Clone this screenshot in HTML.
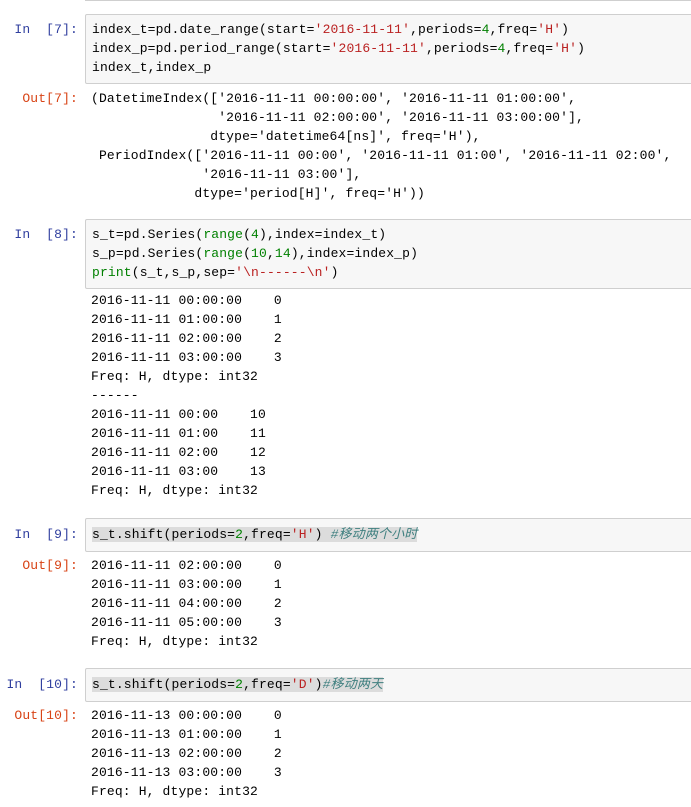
<!DOCTYPE html>
<html><head><meta charset="utf-8"><style>
body{margin:0;width:691px;height:807px;background:#fff;overflow:hidden;position:relative;font-family:"Liberation Mono","Noto Sans CJK SC",monospace;font-size:13px;letter-spacing:0.15px}
.l{position:absolute;white-space:pre;line-height:19px;height:19px}
.box{position:absolute;left:85px;width:620px;background:#f7f7f7;border:1px solid #cfcfcf;border-radius:2px}
.in{color:#303f9f;text-align:right;width:78px;left:0}
.out{color:#d84315;text-align:right;width:78px;left:0}
.s{color:#ba2121}.n{color:#008000}.c{color:#408080;font-style:italic}
.hl{background:#dcdcdc}
</style></head><body>
<div style="position:absolute;left:85px;top:0;width:620px;height:1px;background:#cfcfcf"></div>

<div class="box" style="top:14px;height:68px"></div>
<div class="l in" style="top:20px">In  [7]:</div>
<div class="l" style="left:92px;top:20px">index_t=pd.date_range(start=<span class="s">'2016-11-11'</span>,periods=<span class="n">4</span>,freq=<span class="s">'H'</span>)</div>
<div class="l" style="left:92px;top:39px">index_p=pd.period_range(start=<span class="s">'2016-11-11'</span>,periods=<span class="n">4</span>,freq=<span class="s">'H'</span>)</div>
<div class="l" style="left:92px;top:58px">index_t,index_p</div>
<div class="l out" style="top:89px">Out[7]:</div>
<div class="l" style="left:91px;top:89px">(DatetimeIndex(['2016-11-11 00:00:00', '2016-11-11 01:00:00',</div>
<div class="l" style="left:91px;top:108px">                '2016-11-11 02:00:00', '2016-11-11 03:00:00'],</div>
<div class="l" style="left:91px;top:127px">               dtype='datetime64[ns]', freq='H'),</div>
<div class="l" style="left:91px;top:146px"> PeriodIndex(['2016-11-11 00:00', '2016-11-11 01:00', '2016-11-11 02:00',</div>
<div class="l" style="left:91px;top:165px">              '2016-11-11 03:00'],</div>
<div class="l" style="left:91px;top:184px">             dtype='period[H]', freq='H'))</div>

<div class="box" style="top:219px;height:68px"></div>
<div class="l in" style="top:225px">In  [8]:</div>
<div class="l" style="left:92px;top:225px">s_t=pd.Series(<span class="n">range</span>(<span class="n">4</span>),index=index_t)</div>
<div class="l" style="left:92px;top:244px">s_p=pd.Series(<span class="n">range</span>(<span class="n">10</span>,<span class="n">14</span>),index=index_p)</div>
<div class="l" style="left:92px;top:263px"><span class="n">print</span>(s_t,s_p,sep=<span class="s">'\n------\n'</span>)</div>
<div class="l" style="left:91px;top:291px">2016-11-11 00:00:00    0</div>
<div class="l" style="left:91px;top:310px">2016-11-11 01:00:00    1</div>
<div class="l" style="left:91px;top:329px">2016-11-11 02:00:00    2</div>
<div class="l" style="left:91px;top:348px">2016-11-11 03:00:00    3</div>
<div class="l" style="left:91px;top:367px">Freq: H, dtype: int32</div>
<div class="l" style="left:91px;top:386px">------</div>
<div class="l" style="left:91px;top:405px">2016-11-11 00:00    10</div>
<div class="l" style="left:91px;top:424px">2016-11-11 01:00    11</div>
<div class="l" style="left:91px;top:443px">2016-11-11 02:00    12</div>
<div class="l" style="left:91px;top:462px">2016-11-11 03:00    13</div>
<div class="l" style="left:91px;top:481px">Freq: H, dtype: int32</div>

<div class="box" style="top:518px;height:32px"></div>
<div class="l in" style="top:525px">In  [9]:</div>
<div class="l" style="left:92px;top:525px"><span class="hl">s_t.shift(periods=<span class="n">2</span>,freq=<span class="s">'H'</span>) <span class="c">#移动两个小时</span></span></div>
<div class="l out" style="top:556px">Out[9]:</div>
<div class="l" style="left:91px;top:556px">2016-11-11 02:00:00    0</div>
<div class="l" style="left:91px;top:575px">2016-11-11 03:00:00    1</div>
<div class="l" style="left:91px;top:594px">2016-11-11 04:00:00    2</div>
<div class="l" style="left:91px;top:613px">2016-11-11 05:00:00    3</div>
<div class="l" style="left:91px;top:632px">Freq: H, dtype: int32</div>

<div class="box" style="top:668px;height:32px"></div>
<div class="l in" style="top:675px">In  [10]:</div>
<div class="l" style="left:92px;top:675px"><span class="hl">s_t.shift(periods=<span class="n">2</span>,freq=<span class="s">'D'</span>)<span class="c">#移动两天</span></span></div>
<div class="l out" style="top:706px">Out[10]:</div>
<div class="l" style="left:91px;top:706px">2016-11-13 00:00:00    0</div>
<div class="l" style="left:91px;top:725px">2016-11-13 01:00:00    1</div>
<div class="l" style="left:91px;top:744px">2016-11-13 02:00:00    2</div>
<div class="l" style="left:91px;top:763px">2016-11-13 03:00:00    3</div>
<div class="l" style="left:91px;top:782px">Freq: H, dtype: int32</div>
</body></html>
